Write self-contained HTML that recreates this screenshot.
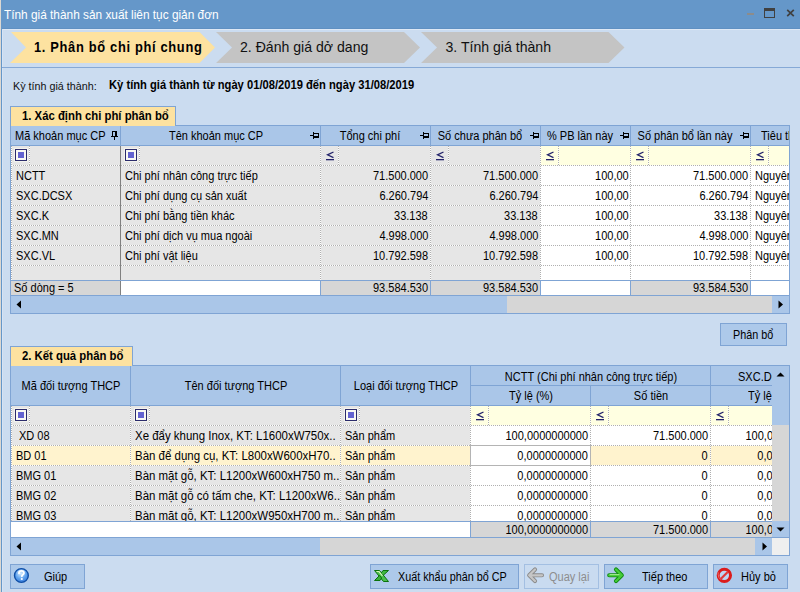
<!DOCTYPE html>
<html><head><meta charset="utf-8">
<style>
*{margin:0;padding:0;box-sizing:border-box}
html,body{width:800px;height:592px;overflow:hidden;background:#CBDCF0}
body{position:relative;font-family:"Liberation Sans",sans-serif;font-size:11px;color:#000}
.a{position:absolute}
.t{position:absolute;white-space:nowrap}
</style></head><body>
<div class="a" style="left:0px;top:0px;width:1px;height:592px;background:#dcd8d2;"></div>
<div class="a" style="left:1px;top:0px;width:1px;height:592px;background:#6597C9;"></div>
<div class="a" style="left:2px;top:29px;width:1px;height:563px;background:#D6E3F4;"></div>
<div class="a" style="left:2px;top:0px;width:798px;height:29px;background:#6597C9;"></div>
<div class="a" style="left:2px;top:28px;width:798px;height:1px;background:#5f90c2;"></div>
<div class="a" style="left:3px;top:29px;width:797px;height:1px;background:#DDE8F5;"></div>
<div class="t" style="left:4px;transform-origin:0 0;top:8px;font-size:13px;line-height:13px;color:#fff;font-weight:normal;transform:scaleX(0.911);">Tính giá thành sản xuất liên tục giản đơn</div>
<div class="a" style="left:747px;top:12.5px;width:7px;height:2px;background:#8c8c8c;"></div>
<div class="a" style="left:764px;top:8px;width:11px;height:10px;border:1px solid #404040;border-top-width:3px"></div>
<svg class="a" style="left:786px;top:9px" width="9" height="8" viewBox="0 0 9 8"><path d="M1.2 0.8L7.8 7.2M7.8 0.8L1.2 7.2" stroke="#404040" stroke-width="1.7"/></svg>
<svg class="a" style="left:0;top:28px" width="800" height="40">
<polygon points="11,4 199.5,4 215,19.5 199.5,35 10,35 26,19.5" fill="#FDE2A0"/>
<polygon points="216,4 404,4 420,19.5 404,35 216,35 232,19.5" fill="#C4C4C4"/>
<polygon points="421,4 608.5,4 624.5,19.5 608.5,35 421,35 437,19.5" fill="#C4C4C4"/>
</svg>
<div class="t" style="left:34px;transform-origin:0 0;top:40px;font-size:14.3px;line-height:14.3px;color:#000;font-weight:bold;transform:scaleX(0.9);letter-spacing:0.75px">1. Phân bổ chi phí chung</div>
<div class="t" style="left:240px;transform-origin:0 0;top:40px;font-size:14.1px;line-height:14.1px;color:#111;font-weight:normal;">2. Đánh giá dở dang</div>
<div class="t" style="left:445.5px;transform-origin:0 0;top:40px;font-size:14.1px;line-height:14.1px;color:#111;font-weight:normal;">3. Tính giá thành</div>
<div class="a" style="left:2px;top:67px;width:798px;height:1px;background:#86A9D6;"></div>
<div class="t" style="left:12.5px;transform-origin:0 0;top:80px;font-size:11.7px;line-height:11.7px;color:#111;font-weight:normal;transform:scaleX(0.92);">Kỳ tính giá thành:</div>
<div class="t" style="left:109px;transform-origin:0 0;top:79px;font-size:12.6px;line-height:12.6px;color:#000;font-weight:bold;transform:scaleX(0.888);">Kỳ tính giá thành từ ngày 01/08/2019 đến ngày 31/08/2019</div>
<div class="a" style="left:10px;top:125px;width:780px;height:189px;border:1px solid #7FA4D4;background:#E6E6E6"></div>
<div class="a" style="left:10px;top:106px;width:166px;height:20px;border:1px solid #7FA4D4;border-bottom:none;background:#FDE2A0"></div>
<div class="t" style="left:21.5px;transform-origin:0 0;top:109px;font-size:13px;line-height:13px;color:#000;font-weight:bold;transform:scaleX(0.872);">1. Xác định chi phí phân bổ</div>
<div class="a" style="left:11px;top:126px;width:778px;height:187px;overflow:hidden"><div class="a" style="left:-11px;top:-126px;width:800px;height:592px">
<div class="a" style="left:11px;top:126px;width:778px;height:19px;background:#AAC6E8;"></div>
<div class="a" style="left:11px;top:145px;width:778px;height:1px;background:#7FA4D4;"></div>
<div class="a" style="left:120px;top:126px;width:1px;height:19px;background:#7FA4D4;"></div>
<div class="a" style="left:320px;top:126px;width:1px;height:19px;background:#7FA4D4;"></div>
<div class="a" style="left:430px;top:126px;width:1px;height:19px;background:#7FA4D4;"></div>
<div class="a" style="left:540px;top:126px;width:1px;height:19px;background:#7FA4D4;"></div>
<div class="a" style="left:630px;top:126px;width:1px;height:19px;background:#7FA4D4;"></div>
<div class="a" style="left:750px;top:126px;width:1px;height:19px;background:#7FA4D4;"></div>
<div class="a" style="left:541px;top:146px;width:248px;height:134px;background:#fff;"></div>
<div class="a" style="left:541px;top:146px;width:248px;height:19px;background:#FFFFE1;"></div>
<div class="a" style="left:11px;top:165px;width:778px;height:1px;background:repeating-linear-gradient(90deg,#B0B0B0 0 1px,#fff 1px 2px)"></div>
<div class="a" style="left:11px;top:185px;width:778px;height:1px;background:repeating-linear-gradient(90deg,#B0B0B0 0 1px,#fff 1px 2px)"></div>
<div class="a" style="left:11px;top:205px;width:778px;height:1px;background:repeating-linear-gradient(90deg,#B0B0B0 0 1px,#fff 1px 2px)"></div>
<div class="a" style="left:11px;top:225px;width:778px;height:1px;background:repeating-linear-gradient(90deg,#B0B0B0 0 1px,#fff 1px 2px)"></div>
<div class="a" style="left:11px;top:245px;width:778px;height:1px;background:repeating-linear-gradient(90deg,#B0B0B0 0 1px,#fff 1px 2px)"></div>
<div class="a" style="left:11px;top:265px;width:778px;height:1px;background:repeating-linear-gradient(90deg,#B0B0B0 0 1px,#fff 1px 2px)"></div>
<div class="a" style="left:120px;top:146px;width:1px;height:134px;background:#808080;"></div>
<div class="a" style="left:11px;top:146px;width:1px;height:134px;background:repeating-linear-gradient(180deg,#B0B0B0 0 1px,#fff 1px 2px)"></div>
<div class="a" style="left:320px;top:146px;width:1px;height:134px;background:repeating-linear-gradient(180deg,#B0B0B0 0 1px,#fff 1px 2px)"></div>
<div class="a" style="left:430px;top:146px;width:1px;height:134px;background:repeating-linear-gradient(180deg,#B0B0B0 0 1px,#fff 1px 2px)"></div>
<div class="a" style="left:540px;top:146px;width:1px;height:134px;background:repeating-linear-gradient(180deg,#B0B0B0 0 1px,#fff 1px 2px)"></div>
<div class="a" style="left:630px;top:146px;width:1px;height:134px;background:repeating-linear-gradient(180deg,#B0B0B0 0 1px,#fff 1px 2px)"></div>
<div class="a" style="left:750px;top:146px;width:1px;height:134px;background:repeating-linear-gradient(180deg,#B0B0B0 0 1px,#fff 1px 2px)"></div>
<div class="a" style="left:14px;top:148px;width:14px;height:14px;background:#F4F4EC"></div><div class="a" style="left:15px;top:149px;width:12px;height:12px;border:1px solid #2c2c6c;background:#FAFAF4"><div class="a" style="left:2px;top:2px;width:6px;height:6px;background:#6464D0"></div></div>
<div class="a" style="left:29px;top:146px;width:1px;height:19px;background:repeating-linear-gradient(180deg,#B0B0B0 0 1px,#fff 1px 2px)"></div>
<div class="a" style="left:124px;top:148px;width:14px;height:14px;background:#F4F4EC"></div><div class="a" style="left:125px;top:149px;width:12px;height:12px;border:1px solid #2c2c6c;background:#FAFAF4"><div class="a" style="left:2px;top:2px;width:6px;height:6px;background:#6464D0"></div></div>
<div class="a" style="left:139px;top:146px;width:1px;height:19px;background:repeating-linear-gradient(180deg,#B0B0B0 0 1px,#fff 1px 2px)"></div>
<svg class="a" style="left:326px;top:151px" width="9" height="10" viewBox="0 0 9 10"><path d="M7.5 1 L1.5 3.8 L7.5 6.6" fill="none" stroke="#23236a" stroke-width="1.3"/><rect x="0" y="8" width="8" height="1.3" fill="#23236a"/></svg>
<div class="a" style="left:338px;top:146px;width:1px;height:19px;background:repeating-linear-gradient(180deg,#B0B0B0 0 1px,#fff 1px 2px)"></div>
<svg class="a" style="left:436px;top:151px" width="9" height="10" viewBox="0 0 9 10"><path d="M7.5 1 L1.5 3.8 L7.5 6.6" fill="none" stroke="#23236a" stroke-width="1.3"/><rect x="0" y="8" width="8" height="1.3" fill="#23236a"/></svg>
<div class="a" style="left:448px;top:146px;width:1px;height:19px;background:repeating-linear-gradient(180deg,#B0B0B0 0 1px,#fff 1px 2px)"></div>
<svg class="a" style="left:546px;top:151px" width="9" height="10" viewBox="0 0 9 10"><path d="M7.5 1 L1.5 3.8 L7.5 6.6" fill="none" stroke="#23236a" stroke-width="1.3"/><rect x="0" y="8" width="8" height="1.3" fill="#23236a"/></svg>
<div class="a" style="left:558px;top:146px;width:1px;height:19px;background:repeating-linear-gradient(180deg,#B0B0B0 0 1px,#fff 1px 2px)"></div>
<svg class="a" style="left:636px;top:151px" width="9" height="10" viewBox="0 0 9 10"><path d="M7.5 1 L1.5 3.8 L7.5 6.6" fill="none" stroke="#23236a" stroke-width="1.3"/><rect x="0" y="8" width="8" height="1.3" fill="#23236a"/></svg>
<div class="a" style="left:648px;top:146px;width:1px;height:19px;background:repeating-linear-gradient(180deg,#B0B0B0 0 1px,#fff 1px 2px)"></div>
<svg class="a" style="left:756px;top:151px" width="9" height="10" viewBox="0 0 9 10"><path d="M7.5 1 L1.5 3.8 L7.5 6.6" fill="none" stroke="#23236a" stroke-width="1.3"/><rect x="0" y="8" width="8" height="1.3" fill="#23236a"/></svg>
<div class="a" style="left:768px;top:146px;width:1px;height:19px;background:repeating-linear-gradient(180deg,#B0B0B0 0 1px,#fff 1px 2px)"></div>
<div class="t" style="left:15px;transform-origin:0 0;top:130px;font-size:12px;line-height:12px;color:#000;font-weight:normal;transform:scaleX(0.917);">Mã khoản mục CP</div>
<svg class="a" style="left:111px;top:131px" width="7" height="9" viewBox="0 0 7 9"><rect x="1" y="0" width="5" height="1" fill="#000"/><rect x="1" y="0" width="1" height="5" fill="#000"/><rect x="4" y="0" width="2" height="5" fill="#000"/><rect x="0" y="5" width="7" height="1" fill="#000"/><rect x="3" y="6" width="1" height="3" fill="#000"/></svg>
<div class="t" style="left:-84.5px;width:600px;text-align:center;transform-origin:50% 0;top:130px;font-size:12px;line-height:12px;color:#000;font-weight:normal;transform:scaleX(0.917);">Tên khoản mục CP</div>
<svg class="a" style="left:310px;top:132px" width="9" height="7" viewBox="0 0 9 7"><rect x="0" y="3" width="3" height="1" fill="#000"/><rect x="3" y="0" width="1" height="7" fill="#000"/><rect x="4" y="1" width="5" height="1" fill="#000"/><rect x="8" y="1" width="1" height="5" fill="#000"/><rect x="4" y="4" width="5" height="2" fill="#000"/></svg>
<div class="t" style="left:70px;width:600px;text-align:center;transform-origin:50% 0;top:130px;font-size:12px;line-height:12px;color:#000;font-weight:normal;transform:scaleX(0.917);">Tổng chi phí</div>
<svg class="a" style="left:420px;top:132px" width="9" height="7" viewBox="0 0 9 7"><rect x="0" y="3" width="3" height="1" fill="#000"/><rect x="3" y="0" width="1" height="7" fill="#000"/><rect x="4" y="1" width="5" height="1" fill="#000"/><rect x="8" y="1" width="1" height="5" fill="#000"/><rect x="4" y="4" width="5" height="2" fill="#000"/></svg>
<div class="t" style="left:180px;width:600px;text-align:center;transform-origin:50% 0;top:130px;font-size:12px;line-height:12px;color:#000;font-weight:normal;transform:scaleX(0.917);">Số chưa phân bổ</div>
<svg class="a" style="left:530px;top:132px" width="9" height="7" viewBox="0 0 9 7"><rect x="0" y="3" width="3" height="1" fill="#000"/><rect x="3" y="0" width="1" height="7" fill="#000"/><rect x="4" y="1" width="5" height="1" fill="#000"/><rect x="8" y="1" width="1" height="5" fill="#000"/><rect x="4" y="4" width="5" height="2" fill="#000"/></svg>
<div class="t" style="left:280px;width:600px;text-align:center;transform-origin:50% 0;top:130px;font-size:12px;line-height:12px;color:#000;font-weight:normal;transform:scaleX(0.917);">% PB lần này</div>
<svg class="a" style="left:620px;top:132px" width="9" height="7" viewBox="0 0 9 7"><rect x="0" y="3" width="3" height="1" fill="#000"/><rect x="3" y="0" width="1" height="7" fill="#000"/><rect x="4" y="1" width="5" height="1" fill="#000"/><rect x="8" y="1" width="1" height="5" fill="#000"/><rect x="4" y="4" width="5" height="2" fill="#000"/></svg>
<div class="t" style="left:385px;width:600px;text-align:center;transform-origin:50% 0;top:130px;font-size:12px;line-height:12px;color:#000;font-weight:normal;transform:scaleX(0.917);">Số phân bổ lần này</div>
<svg class="a" style="left:740px;top:132px" width="9" height="7" viewBox="0 0 9 7"><rect x="0" y="3" width="3" height="1" fill="#000"/><rect x="3" y="0" width="1" height="7" fill="#000"/><rect x="4" y="1" width="5" height="1" fill="#000"/><rect x="8" y="1" width="1" height="5" fill="#000"/><rect x="4" y="4" width="5" height="2" fill="#000"/></svg>
<div class="t" style="left:761px;transform-origin:0 0;top:130px;font-size:12px;line-height:12px;color:#000;font-weight:normal;transform:scaleX(0.917);">Tiêu thức</div>
<div class="t" style="left:15.5px;transform-origin:0 0;top:170px;font-size:12px;line-height:12px;color:#000;font-weight:normal;transform:scaleX(0.917);">NCTT</div>
<div class="t" style="left:124.5px;transform-origin:0 0;top:170px;font-size:12px;line-height:12px;color:#000;font-weight:normal;transform:scaleX(0.917);">Chi phí nhân công trực tiếp</div>
<div class="t" style="right:372px;text-align:right;transform-origin:100% 0;top:170px;font-size:12px;line-height:12px;color:#000;font-weight:normal;transform:scaleX(0.917);">71.500.000</div>
<div class="t" style="right:262px;text-align:right;transform-origin:100% 0;top:170px;font-size:12px;line-height:12px;color:#000;font-weight:normal;transform:scaleX(0.917);">71.500.000</div>
<div class="t" style="right:171.5px;text-align:right;transform-origin:100% 0;top:170px;font-size:12px;line-height:12px;color:#000;font-weight:normal;transform:scaleX(0.917);">100,00</div>
<div class="t" style="right:52px;text-align:right;transform-origin:100% 0;top:170px;font-size:12px;line-height:12px;color:#000;font-weight:normal;transform:scaleX(0.917);">71.500.000</div>
<div class="t" style="left:755px;transform-origin:0 0;top:170px;font-size:12px;line-height:12px;color:#000;font-weight:normal;transform:scaleX(0.917);">Nguyên</div>
<div class="t" style="left:15.5px;transform-origin:0 0;top:190px;font-size:12px;line-height:12px;color:#000;font-weight:normal;transform:scaleX(0.917);">SXC.DCSX</div>
<div class="t" style="left:124.5px;transform-origin:0 0;top:190px;font-size:12px;line-height:12px;color:#000;font-weight:normal;transform:scaleX(0.917);">Chi phí dụng cụ sản xuất</div>
<div class="t" style="right:372px;text-align:right;transform-origin:100% 0;top:190px;font-size:12px;line-height:12px;color:#000;font-weight:normal;transform:scaleX(0.917);">6.260.794</div>
<div class="t" style="right:262px;text-align:right;transform-origin:100% 0;top:190px;font-size:12px;line-height:12px;color:#000;font-weight:normal;transform:scaleX(0.917);">6.260.794</div>
<div class="t" style="right:171.5px;text-align:right;transform-origin:100% 0;top:190px;font-size:12px;line-height:12px;color:#000;font-weight:normal;transform:scaleX(0.917);">100,00</div>
<div class="t" style="right:52px;text-align:right;transform-origin:100% 0;top:190px;font-size:12px;line-height:12px;color:#000;font-weight:normal;transform:scaleX(0.917);">6.260.794</div>
<div class="t" style="left:755px;transform-origin:0 0;top:190px;font-size:12px;line-height:12px;color:#000;font-weight:normal;transform:scaleX(0.917);">Nguyên</div>
<div class="t" style="left:15.5px;transform-origin:0 0;top:210px;font-size:12px;line-height:12px;color:#000;font-weight:normal;transform:scaleX(0.917);">SXC.K</div>
<div class="t" style="left:124.5px;transform-origin:0 0;top:210px;font-size:12px;line-height:12px;color:#000;font-weight:normal;transform:scaleX(0.917);">Chi phí bằng tiền khác</div>
<div class="t" style="right:372px;text-align:right;transform-origin:100% 0;top:210px;font-size:12px;line-height:12px;color:#000;font-weight:normal;transform:scaleX(0.917);">33.138</div>
<div class="t" style="right:262px;text-align:right;transform-origin:100% 0;top:210px;font-size:12px;line-height:12px;color:#000;font-weight:normal;transform:scaleX(0.917);">33.138</div>
<div class="t" style="right:171.5px;text-align:right;transform-origin:100% 0;top:210px;font-size:12px;line-height:12px;color:#000;font-weight:normal;transform:scaleX(0.917);">100,00</div>
<div class="t" style="right:52px;text-align:right;transform-origin:100% 0;top:210px;font-size:12px;line-height:12px;color:#000;font-weight:normal;transform:scaleX(0.917);">33.138</div>
<div class="t" style="left:755px;transform-origin:0 0;top:210px;font-size:12px;line-height:12px;color:#000;font-weight:normal;transform:scaleX(0.917);">Nguyên</div>
<div class="t" style="left:15.5px;transform-origin:0 0;top:230px;font-size:12px;line-height:12px;color:#000;font-weight:normal;transform:scaleX(0.917);">SXC.MN</div>
<div class="t" style="left:124.5px;transform-origin:0 0;top:230px;font-size:12px;line-height:12px;color:#000;font-weight:normal;transform:scaleX(0.917);">Chi phí dịch vụ mua ngoài</div>
<div class="t" style="right:372px;text-align:right;transform-origin:100% 0;top:230px;font-size:12px;line-height:12px;color:#000;font-weight:normal;transform:scaleX(0.917);">4.998.000</div>
<div class="t" style="right:262px;text-align:right;transform-origin:100% 0;top:230px;font-size:12px;line-height:12px;color:#000;font-weight:normal;transform:scaleX(0.917);">4.998.000</div>
<div class="t" style="right:171.5px;text-align:right;transform-origin:100% 0;top:230px;font-size:12px;line-height:12px;color:#000;font-weight:normal;transform:scaleX(0.917);">100,00</div>
<div class="t" style="right:52px;text-align:right;transform-origin:100% 0;top:230px;font-size:12px;line-height:12px;color:#000;font-weight:normal;transform:scaleX(0.917);">4.998.000</div>
<div class="t" style="left:755px;transform-origin:0 0;top:230px;font-size:12px;line-height:12px;color:#000;font-weight:normal;transform:scaleX(0.917);">Nguyên</div>
<div class="t" style="left:15.5px;transform-origin:0 0;top:250px;font-size:12px;line-height:12px;color:#000;font-weight:normal;transform:scaleX(0.917);">SXC.VL</div>
<div class="t" style="left:124.5px;transform-origin:0 0;top:250px;font-size:12px;line-height:12px;color:#000;font-weight:normal;transform:scaleX(0.917);">Chi phí vật liệu</div>
<div class="t" style="right:372px;text-align:right;transform-origin:100% 0;top:250px;font-size:12px;line-height:12px;color:#000;font-weight:normal;transform:scaleX(0.917);">10.792.598</div>
<div class="t" style="right:262px;text-align:right;transform-origin:100% 0;top:250px;font-size:12px;line-height:12px;color:#000;font-weight:normal;transform:scaleX(0.917);">10.792.598</div>
<div class="t" style="right:171.5px;text-align:right;transform-origin:100% 0;top:250px;font-size:12px;line-height:12px;color:#000;font-weight:normal;transform:scaleX(0.917);">100,00</div>
<div class="t" style="right:52px;text-align:right;transform-origin:100% 0;top:250px;font-size:12px;line-height:12px;color:#000;font-weight:normal;transform:scaleX(0.917);">10.792.598</div>
<div class="t" style="left:755px;transform-origin:0 0;top:250px;font-size:12px;line-height:12px;color:#000;font-weight:normal;transform:scaleX(0.917);">Nguyên</div>
<div class="a" style="left:11px;top:280px;width:778px;height:1px;background:#7FA4D4;"></div>
<div class="a" style="left:11px;top:281px;width:109px;height:14px;background:#D6D6D6;"></div>
<div class="a" style="left:121px;top:281px;width:199px;height:14px;background:#fff;"></div>
<div class="a" style="left:321px;top:281px;width:219px;height:14px;background:#D6D6D6;"></div>
<div class="a" style="left:541px;top:281px;width:89px;height:14px;background:#fff;"></div>
<div class="a" style="left:631px;top:281px;width:119px;height:14px;background:#D6D6D6;"></div>
<div class="a" style="left:751px;top:281px;width:38px;height:14px;background:#fff;"></div>
<div class="a" style="left:120px;top:281px;width:1px;height:14px;background:#808080;"></div>
<div class="a" style="left:320px;top:281px;width:1px;height:14px;background:#7FA4D4;"></div>
<div class="a" style="left:430px;top:281px;width:1px;height:14px;background:#7FA4D4;"></div>
<div class="a" style="left:540px;top:281px;width:1px;height:14px;background:#7FA4D4;"></div>
<div class="a" style="left:630px;top:281px;width:1px;height:14px;background:#7FA4D4;"></div>
<div class="a" style="left:750px;top:281px;width:1px;height:14px;background:#7FA4D4;"></div>
<div class="a" style="left:11px;top:295px;width:778px;height:1px;background:#7FA4D4;"></div>
<div class="t" style="left:14px;transform-origin:0 0;top:282px;font-size:12px;line-height:12px;color:#000;font-weight:normal;transform:scaleX(0.917);">Số dòng = 5</div>
<div class="t" style="right:372px;text-align:right;transform-origin:100% 0;top:282px;font-size:12px;line-height:12px;color:#000;font-weight:normal;transform:scaleX(0.917);">93.584.530</div>
<div class="t" style="right:262px;text-align:right;transform-origin:100% 0;top:282px;font-size:12px;line-height:12px;color:#000;font-weight:normal;transform:scaleX(0.917);">93.584.530</div>
<div class="t" style="right:52px;text-align:right;transform-origin:100% 0;top:282px;font-size:12px;line-height:12px;color:#000;font-weight:normal;transform:scaleX(0.917);">93.584.530</div>
<div class="a" style="left:11px;top:296px;width:778px;height:17px;background:#AAC6E8;"></div>
<div class="a" style="left:507px;top:296px;width:265px;height:17px;background:#D6D6D6;"></div>
<svg class="a" style="left:16px;top:300px" width="6" height="9"><path d="M5 0.5V8.5L0.5 4.5Z" fill="#000"/></svg>
<svg class="a" style="left:778px;top:300px" width="6" height="9"><path d="M0.5 0.5V8.5L5 4.5Z" fill="#000"/></svg>
</div></div>
<div class="a" style="left:720px;top:323px;width:67px;height:23px;border:1px solid #7FA4D4;background:#ADC9EA"></div>
<div class="t" style="left:732.5px;transform-origin:0 0;top:329px;font-size:12px;line-height:12px;color:#000;font-weight:normal;transform:scaleX(0.9);">Phân bổ</div>
<div class="a" style="left:10px;top:365px;width:780px;height:191px;border:1px solid #7FA4D4;background:#E6E6E6"></div>
<div class="a" style="left:10px;top:346px;width:123px;height:20px;border:1px solid #7FA4D4;border-bottom:none;background:#FDE2A0"></div>
<div class="t" style="left:21.5px;transform-origin:0 0;top:349px;font-size:13px;line-height:13px;color:#000;font-weight:bold;transform:scaleX(0.872);">2. Kết quả phân bổ</div>
<div class="a" style="left:11px;top:366px;width:761px;height:171px;overflow:hidden"><div class="a" style="left:-11px;top:-366px;width:800px;height:592px">
<div class="a" style="left:11px;top:366px;width:761px;height:39px;background:#AAC6E8;"></div>
<div class="a" style="left:11px;top:405px;width:761px;height:1px;background:#7FA4D4;"></div>
<div class="a" style="left:130px;top:366px;width:1px;height:39px;background:#7FA4D4;"></div>
<div class="a" style="left:340px;top:366px;width:1px;height:39px;background:#7FA4D4;"></div>
<div class="a" style="left:470px;top:366px;width:1px;height:39px;background:#7FA4D4;"></div>
<div class="a" style="left:710px;top:366px;width:1px;height:39px;background:#7FA4D4;"></div>
<div class="a" style="left:590px;top:386px;width:1px;height:19px;background:#7FA4D4;"></div>
<div class="a" style="left:471px;top:385px;width:301px;height:1px;background:#7FA4D4;"></div>
<div class="t" style="left:-229.5px;width:600px;text-align:center;transform-origin:50% 0;top:380px;font-size:12px;line-height:12px;color:#000;font-weight:normal;transform:scaleX(0.917);">Mã đối tượng THCP</div>
<div class="t" style="left:-64px;width:600px;text-align:center;transform-origin:50% 0;top:380px;font-size:12px;line-height:12px;color:#000;font-weight:normal;transform:scaleX(0.917);">Tên đối tượng THCP</div>
<div class="t" style="left:106px;width:600px;text-align:center;transform-origin:50% 0;top:380px;font-size:12px;line-height:12px;color:#000;font-weight:normal;transform:scaleX(0.917);">Loại đối tượng THCP</div>
<div class="t" style="left:290.5px;width:600px;text-align:center;transform-origin:50% 0;top:371px;font-size:12px;line-height:12px;color:#000;font-weight:normal;transform:scaleX(0.917);">NCTT (Chi phí nhân công trực tiếp)</div>
<div class="t" style="left:737.5px;transform-origin:0 0;top:371px;font-size:12px;line-height:12px;color:#000;font-weight:normal;transform:scaleX(0.917);">SXC.DCSX</div>
<div class="t" style="left:230.5px;width:600px;text-align:center;transform-origin:50% 0;top:390px;font-size:12px;line-height:12px;color:#000;font-weight:normal;transform:scaleX(0.917);">Tỷ lệ (%)</div>
<div class="t" style="left:350.5px;width:600px;text-align:center;transform-origin:50% 0;top:390px;font-size:12px;line-height:12px;color:#000;font-weight:normal;transform:scaleX(0.917);">Số tiền</div>
<div class="t" style="left:748px;transform-origin:0 0;top:390px;font-size:12px;line-height:12px;color:#000;font-weight:normal;transform:scaleX(0.917);">Tỷ lệ (%)</div>
<div class="a" style="left:471px;top:406px;width:301px;height:115px;background:#fff;"></div>
<div class="a" style="left:471px;top:406px;width:301px;height:19px;background:#FFFFE1;"></div>
<div class="a" style="left:11px;top:446px;width:761px;height:19px;background:#FFF3CE;"></div>
<div class="a" style="left:11px;top:425px;width:761px;height:1px;background:repeating-linear-gradient(90deg,#B0B0B0 0 1px,#fff 1px 2px)"></div>
<div class="a" style="left:11px;top:445px;width:761px;height:1px;background:repeating-linear-gradient(90deg,#B0B0B0 0 1px,#fff 1px 2px)"></div>
<div class="a" style="left:11px;top:465px;width:761px;height:1px;background:repeating-linear-gradient(90deg,#B0B0B0 0 1px,#fff 1px 2px)"></div>
<div class="a" style="left:11px;top:485px;width:761px;height:1px;background:repeating-linear-gradient(90deg,#B0B0B0 0 1px,#fff 1px 2px)"></div>
<div class="a" style="left:11px;top:505px;width:761px;height:1px;background:repeating-linear-gradient(90deg,#B0B0B0 0 1px,#fff 1px 2px)"></div>
<div class="a" style="left:11px;top:406px;width:1px;height:115px;background:repeating-linear-gradient(180deg,#B0B0B0 0 1px,#fff 1px 2px)"></div>
<div class="a" style="left:130px;top:406px;width:1px;height:115px;background:repeating-linear-gradient(180deg,#B0B0B0 0 1px,#fff 1px 2px)"></div>
<div class="a" style="left:340px;top:406px;width:1px;height:115px;background:repeating-linear-gradient(180deg,#B0B0B0 0 1px,#fff 1px 2px)"></div>
<div class="a" style="left:470px;top:406px;width:1px;height:115px;background:repeating-linear-gradient(180deg,#B0B0B0 0 1px,#fff 1px 2px)"></div>
<div class="a" style="left:590px;top:406px;width:1px;height:115px;background:repeating-linear-gradient(180deg,#B0B0B0 0 1px,#fff 1px 2px)"></div>
<div class="a" style="left:710px;top:406px;width:1px;height:115px;background:repeating-linear-gradient(180deg,#B0B0B0 0 1px,#fff 1px 2px)"></div>
<div class="a" style="left:470px;top:445px;width:121px;height:21px;border:1px solid #B4B4B4;background:#fff"></div>
<div class="a" style="left:14px;top:408px;width:14px;height:14px;background:#F4F4EC"></div><div class="a" style="left:15px;top:409px;width:12px;height:12px;border:1px solid #2c2c6c;background:#FAFAF4"><div class="a" style="left:2px;top:2px;width:6px;height:6px;background:#6464D0"></div></div>
<div class="a" style="left:29px;top:406px;width:1px;height:19px;background:repeating-linear-gradient(180deg,#B0B0B0 0 1px,#fff 1px 2px)"></div>
<div class="a" style="left:134px;top:408px;width:14px;height:14px;background:#F4F4EC"></div><div class="a" style="left:135px;top:409px;width:12px;height:12px;border:1px solid #2c2c6c;background:#FAFAF4"><div class="a" style="left:2px;top:2px;width:6px;height:6px;background:#6464D0"></div></div>
<div class="a" style="left:149px;top:406px;width:1px;height:19px;background:repeating-linear-gradient(180deg,#B0B0B0 0 1px,#fff 1px 2px)"></div>
<div class="a" style="left:344px;top:408px;width:14px;height:14px;background:#F4F4EC"></div><div class="a" style="left:345px;top:409px;width:12px;height:12px;border:1px solid #2c2c6c;background:#FAFAF4"><div class="a" style="left:2px;top:2px;width:6px;height:6px;background:#6464D0"></div></div>
<div class="a" style="left:359px;top:406px;width:1px;height:19px;background:repeating-linear-gradient(180deg,#B0B0B0 0 1px,#fff 1px 2px)"></div>
<svg class="a" style="left:476px;top:411px" width="9" height="10" viewBox="0 0 9 10"><path d="M7.5 1 L1.5 3.8 L7.5 6.6" fill="none" stroke="#23236a" stroke-width="1.3"/><rect x="0" y="8" width="8" height="1.3" fill="#23236a"/></svg>
<div class="a" style="left:488px;top:406px;width:1px;height:19px;background:repeating-linear-gradient(180deg,#B0B0B0 0 1px,#fff 1px 2px)"></div>
<svg class="a" style="left:596px;top:411px" width="9" height="10" viewBox="0 0 9 10"><path d="M7.5 1 L1.5 3.8 L7.5 6.6" fill="none" stroke="#23236a" stroke-width="1.3"/><rect x="0" y="8" width="8" height="1.3" fill="#23236a"/></svg>
<div class="a" style="left:608px;top:406px;width:1px;height:19px;background:repeating-linear-gradient(180deg,#B0B0B0 0 1px,#fff 1px 2px)"></div>
<svg class="a" style="left:716px;top:411px" width="9" height="10" viewBox="0 0 9 10"><path d="M7.5 1 L1.5 3.8 L7.5 6.6" fill="none" stroke="#23236a" stroke-width="1.3"/><rect x="0" y="8" width="8" height="1.3" fill="#23236a"/></svg>
<div class="a" style="left:728px;top:406px;width:1px;height:19px;background:repeating-linear-gradient(180deg,#B0B0B0 0 1px,#fff 1px 2px)"></div>
<div class="t" style="left:18.5px;transform-origin:0 0;top:430px;font-size:12px;line-height:12px;color:#000;font-weight:normal;transform:scaleX(0.917);">XD 08</div>
<div class="t" style="left:134.5px;transform-origin:0 0;top:430px;font-size:12px;line-height:12px;color:#000;font-weight:normal;transform:scaleX(0.955);">Xe đẩy khung Inox, KT: L1600xW750x..</div>
<div class="t" style="left:344.5px;transform-origin:0 0;top:430px;font-size:12px;line-height:12px;color:#000;font-weight:normal;transform:scaleX(0.917);">Sản phẩm</div>
<div class="t" style="right:212px;text-align:right;transform-origin:100% 0;top:430px;font-size:12px;line-height:12px;color:#000;font-weight:normal;transform:scaleX(0.917);">100,0000000000</div>
<div class="t" style="right:92px;text-align:right;transform-origin:100% 0;top:430px;font-size:12px;line-height:12px;color:#000;font-weight:normal;transform:scaleX(0.917);">71.500.000</div>
<div class="t" style="right:-28px;text-align:right;transform-origin:100% 0;top:430px;font-size:12px;line-height:12px;color:#000;font-weight:normal;transform:scaleX(0.917);">100,0000000000</div>
<div class="t" style="left:15.5px;transform-origin:0 0;top:450px;font-size:12px;line-height:12px;color:#000;font-weight:normal;transform:scaleX(0.917);">BD 01</div>
<div class="t" style="left:134.5px;transform-origin:0 0;top:450px;font-size:12px;line-height:12px;color:#000;font-weight:normal;transform:scaleX(0.955);">Bàn để dụng cụ, KT: L800xW600xH70..</div>
<div class="t" style="left:344.5px;transform-origin:0 0;top:450px;font-size:12px;line-height:12px;color:#000;font-weight:normal;transform:scaleX(0.917);">Sản phẩm</div>
<div class="t" style="right:212px;text-align:right;transform-origin:100% 0;top:450px;font-size:12px;line-height:12px;color:#000;font-weight:normal;transform:scaleX(0.917);">0,0000000000</div>
<div class="t" style="right:92px;text-align:right;transform-origin:100% 0;top:450px;font-size:12px;line-height:12px;color:#000;font-weight:normal;transform:scaleX(0.917);">0</div>
<div class="t" style="right:-28px;text-align:right;transform-origin:100% 0;top:450px;font-size:12px;line-height:12px;color:#000;font-weight:normal;transform:scaleX(0.917);">0,0000000000</div>
<div class="t" style="left:15.5px;transform-origin:0 0;top:470px;font-size:12px;line-height:12px;color:#000;font-weight:normal;transform:scaleX(0.917);">BMG 01</div>
<div class="t" style="left:134.5px;transform-origin:0 0;top:470px;font-size:12px;line-height:12px;color:#000;font-weight:normal;transform:scaleX(0.955);">Bàn mặt gỗ, KT: L1200xW600xH750 m..</div>
<div class="t" style="left:344.5px;transform-origin:0 0;top:470px;font-size:12px;line-height:12px;color:#000;font-weight:normal;transform:scaleX(0.917);">Sản phẩm</div>
<div class="t" style="right:212px;text-align:right;transform-origin:100% 0;top:470px;font-size:12px;line-height:12px;color:#000;font-weight:normal;transform:scaleX(0.917);">0,0000000000</div>
<div class="t" style="right:92px;text-align:right;transform-origin:100% 0;top:470px;font-size:12px;line-height:12px;color:#000;font-weight:normal;transform:scaleX(0.917);">0</div>
<div class="t" style="right:-28px;text-align:right;transform-origin:100% 0;top:470px;font-size:12px;line-height:12px;color:#000;font-weight:normal;transform:scaleX(0.917);">0,0000000000</div>
<div class="t" style="left:15.5px;transform-origin:0 0;top:490px;font-size:12px;line-height:12px;color:#000;font-weight:normal;transform:scaleX(0.917);">BMG 02</div>
<div class="t" style="left:134.5px;transform-origin:0 0;top:490px;font-size:12px;line-height:12px;color:#000;font-weight:normal;transform:scaleX(0.955);">Bàn mặt gỗ có tấm che, KT: L1200xW6..</div>
<div class="t" style="left:344.5px;transform-origin:0 0;top:490px;font-size:12px;line-height:12px;color:#000;font-weight:normal;transform:scaleX(0.917);">Sản phẩm</div>
<div class="t" style="right:212px;text-align:right;transform-origin:100% 0;top:490px;font-size:12px;line-height:12px;color:#000;font-weight:normal;transform:scaleX(0.917);">0,0000000000</div>
<div class="t" style="right:92px;text-align:right;transform-origin:100% 0;top:490px;font-size:12px;line-height:12px;color:#000;font-weight:normal;transform:scaleX(0.917);">0</div>
<div class="t" style="right:-28px;text-align:right;transform-origin:100% 0;top:490px;font-size:12px;line-height:12px;color:#000;font-weight:normal;transform:scaleX(0.917);">0,0000000000</div>
<div class="t" style="left:15.5px;transform-origin:0 0;top:510px;font-size:12px;line-height:12px;color:#000;font-weight:normal;transform:scaleX(0.917);">BMG 03</div>
<div class="t" style="left:134.5px;transform-origin:0 0;top:510px;font-size:12px;line-height:12px;color:#000;font-weight:normal;transform:scaleX(0.955);">Bàn mặt gỗ, KT: L1200xW950xH700 m..</div>
<div class="t" style="left:344.5px;transform-origin:0 0;top:510px;font-size:12px;line-height:12px;color:#000;font-weight:normal;transform:scaleX(0.917);">Sản phẩm</div>
<div class="t" style="right:212px;text-align:right;transform-origin:100% 0;top:510px;font-size:12px;line-height:12px;color:#000;font-weight:normal;transform:scaleX(0.917);">0,0000000000</div>
<div class="t" style="right:92px;text-align:right;transform-origin:100% 0;top:510px;font-size:12px;line-height:12px;color:#000;font-weight:normal;transform:scaleX(0.917);">0</div>
<div class="t" style="right:-28px;text-align:right;transform-origin:100% 0;top:510px;font-size:12px;line-height:12px;color:#000;font-weight:normal;transform:scaleX(0.917);">0,0000000000</div>
<div class="a" style="left:11px;top:521px;width:761px;height:1px;background:#7FA4D4;"></div>
<div class="a" style="left:11px;top:522px;width:459px;height:15px;background:#fff;"></div>
<div class="a" style="left:471px;top:522px;width:301px;height:15px;background:#D6D6D6;"></div>
<div class="a" style="left:470px;top:522px;width:1px;height:15px;background:#7FA4D4;"></div>
<div class="a" style="left:590px;top:522px;width:1px;height:15px;background:#7FA4D4;"></div>
<div class="a" style="left:710px;top:522px;width:1px;height:15px;background:#7FA4D4;"></div>
<div class="t" style="right:212px;text-align:right;transform-origin:100% 0;top:524px;font-size:12px;line-height:12px;color:#000;font-weight:normal;transform:scaleX(0.917);">100,0000000000</div>
<div class="t" style="right:92px;text-align:right;transform-origin:100% 0;top:524px;font-size:12px;line-height:12px;color:#000;font-weight:normal;transform:scaleX(0.917);">71.500.000</div>
<div class="t" style="right:-28px;text-align:right;transform-origin:100% 0;top:524px;font-size:12px;line-height:12px;color:#000;font-weight:normal;transform:scaleX(0.917);">100,0000000000</div>
</div></div>
<div class="a" style="left:772px;top:366px;width:17px;height:155px;background:#D6D6D6;"></div>
<div class="a" style="left:772px;top:366px;width:17px;height:59px;background:#AAC6E8;"></div>
<div class="a" style="left:772px;top:521px;width:17px;height:16px;background:#AAC6E8;"></div>
<svg class="a" style="left:776px;top:372px" width="9" height="5"><path d="M0.5 4.5H8.5L4.5 0.5Z" fill="#000"/></svg>
<svg class="a" style="left:776px;top:527px" width="9" height="5"><path d="M0.5 0.5H8.5L4.5 4.5Z" fill="#000"/></svg>
<div class="a" style="left:11px;top:537px;width:778px;height:1px;background:#7FA4D4;"></div>
<div class="a" style="left:11px;top:538px;width:761px;height:17px;background:#AAC6E8;"></div>
<div class="a" style="left:320px;top:538px;width:435px;height:17px;background:#D6D6D6;"></div>
<div class="a" style="left:772px;top:538px;width:17px;height:17px;background:#EFEFEF;"></div>
<svg class="a" style="left:16px;top:542px" width="6" height="9"><path d="M5 0.5V8.5L0.5 4.5Z" fill="#000"/></svg>
<svg class="a" style="left:762px;top:542px" width="6" height="9"><path d="M0.5 0.5V8.5L5 4.5Z" fill="#000"/></svg>
<div class="a" style="left:10px;top:564px;width:75px;height:25px;border:1px solid #7FA4D4;background:#ADC9EA"></div>
<div class="t" style="left:44px;transform-origin:0 0;top:571px;font-size:12px;line-height:12px;color:#000;font-weight:normal;transform:scaleX(0.917);">Giúp</div>
<svg class="a" style="left:13px;top:567px" width="17" height="17" viewBox="0 0 17 17"><defs><radialGradient id="hg" cx="0.45" cy="0.35" r="0.65"><stop offset="0" stop-color="#d6ecff"/><stop offset="0.6" stop-color="#5ea2ee"/><stop offset="1" stop-color="#3a7ddc"/></radialGradient></defs><circle cx="8.4" cy="8.5" r="6.9" fill="url(#hg)" stroke="#0f4ea6" stroke-width="1.4"/><path d="M6 6.2C6 4.6 7 3.9 8.4 3.9C9.9 3.9 10.9 4.7 10.9 6C10.9 7.5 9.1 7.7 8.9 9.2" fill="none" stroke="#fff" stroke-width="1.9" stroke-linecap="round"/><circle cx="8.8" cy="12" r="1.1" fill="#fff"/></svg>
<div class="a" style="left:370px;top:564px;width:149px;height:25px;border:1px solid #7FA4D4;background:#ADC9EA"></div>
<div class="t" style="left:398px;transform-origin:0 0;top:571px;font-size:12px;line-height:12px;color:#000;font-weight:normal;transform:scaleX(0.9);">Xuất khẩu phân bổ CP</div>
<svg class="a" style="left:373px;top:569px" width="17" height="14" viewBox="0 0 17 14"><g stroke="#0b720b" stroke-width="1" stroke-linejoin="round"><path d="M1.5 1.5H6.5L15.5 12.5H10.5Z" fill="#4cc04c"/><path d="M10 1.5H15.5L10 6.5L8 4.3Z" fill="#42b842"/><path d="M1.5 11.5L6.5 6.5L8.7 9L7 11.5Z" fill="#38b038"/></g><path d="M3.5 2.5H6L9.5 6.8" stroke="#d8f7b8" stroke-width="1.2" fill="none"/></svg>
<div class="a" style="left:524px;top:564px;width:75px;height:25px;border:1px solid #A3BFE2;background:#C9DBF0"></div>
<div class="t" style="left:549px;transform-origin:0 0;top:571px;font-size:12px;line-height:12px;color:#8d8d8d;font-weight:normal;transform:scaleX(0.917);">Quay lại</div>
<svg class="a" style="left:524px;top:564px" width="24" height="24" viewBox="0 0 24 24"><g fill="none" stroke-linecap="round" stroke-linejoin="round"><path d="M11 5.5L5.2 11.3L11 17M5.2 11.3H18" stroke="#8a8a8a" stroke-width="4.1"/><path d="M11 5.5L5.2 11.3L11 17M5.2 11.3H18" stroke="#c6c6c6" stroke-width="2.3"/></g></svg>
<div class="a" style="left:604px;top:564px;width:104px;height:25px;border:1px solid #7FA4D4;background:#ADC9EA"></div>
<div class="t" style="left:641.5px;transform-origin:0 0;top:571px;font-size:12px;line-height:12px;color:#000;font-weight:normal;transform:scaleX(0.917);">Tiếp theo</div>
<svg class="a" style="left:604px;top:564px" width="24" height="24" viewBox="0 0 24 24"><g fill="none" stroke-linecap="round" stroke-linejoin="round"><path d="M12 5.5L17.8 11.3L12 17M17.8 11.3H5.2" stroke="#0e8a0e" stroke-width="4.1"/><path d="M12 5.5L17.8 11.3L12 17M17.8 11.3H5.2" stroke="#45cc38" stroke-width="2.3"/><path d="M6 10.6H15" stroke="#a6ec90" stroke-width="1"/></g></svg>
<div class="a" style="left:713px;top:564px;width:75px;height:25px;border:1px solid #7FA4D4;background:#ADC9EA"></div>
<div class="t" style="left:741px;transform-origin:0 0;top:571px;font-size:12px;line-height:12px;color:#000;font-weight:normal;transform:scaleX(0.917);">Hủy bỏ</div>
<svg class="a" style="left:713px;top:564px" width="24" height="24" viewBox="0 0 24 24"><circle cx="11.35" cy="11.35" r="6.2" fill="#bcd6f4" stroke="#dc1c1c" stroke-width="3"/><circle cx="11.35" cy="10.5" r="6.2" fill="none" stroke="#f08080" stroke-width="0.8" stroke-dasharray="8 40" stroke-dashoffset="-13"/><path d="M8 14.7L14.7 8" stroke="#e23a3a" stroke-width="2.2"/></svg>
</body></html>
